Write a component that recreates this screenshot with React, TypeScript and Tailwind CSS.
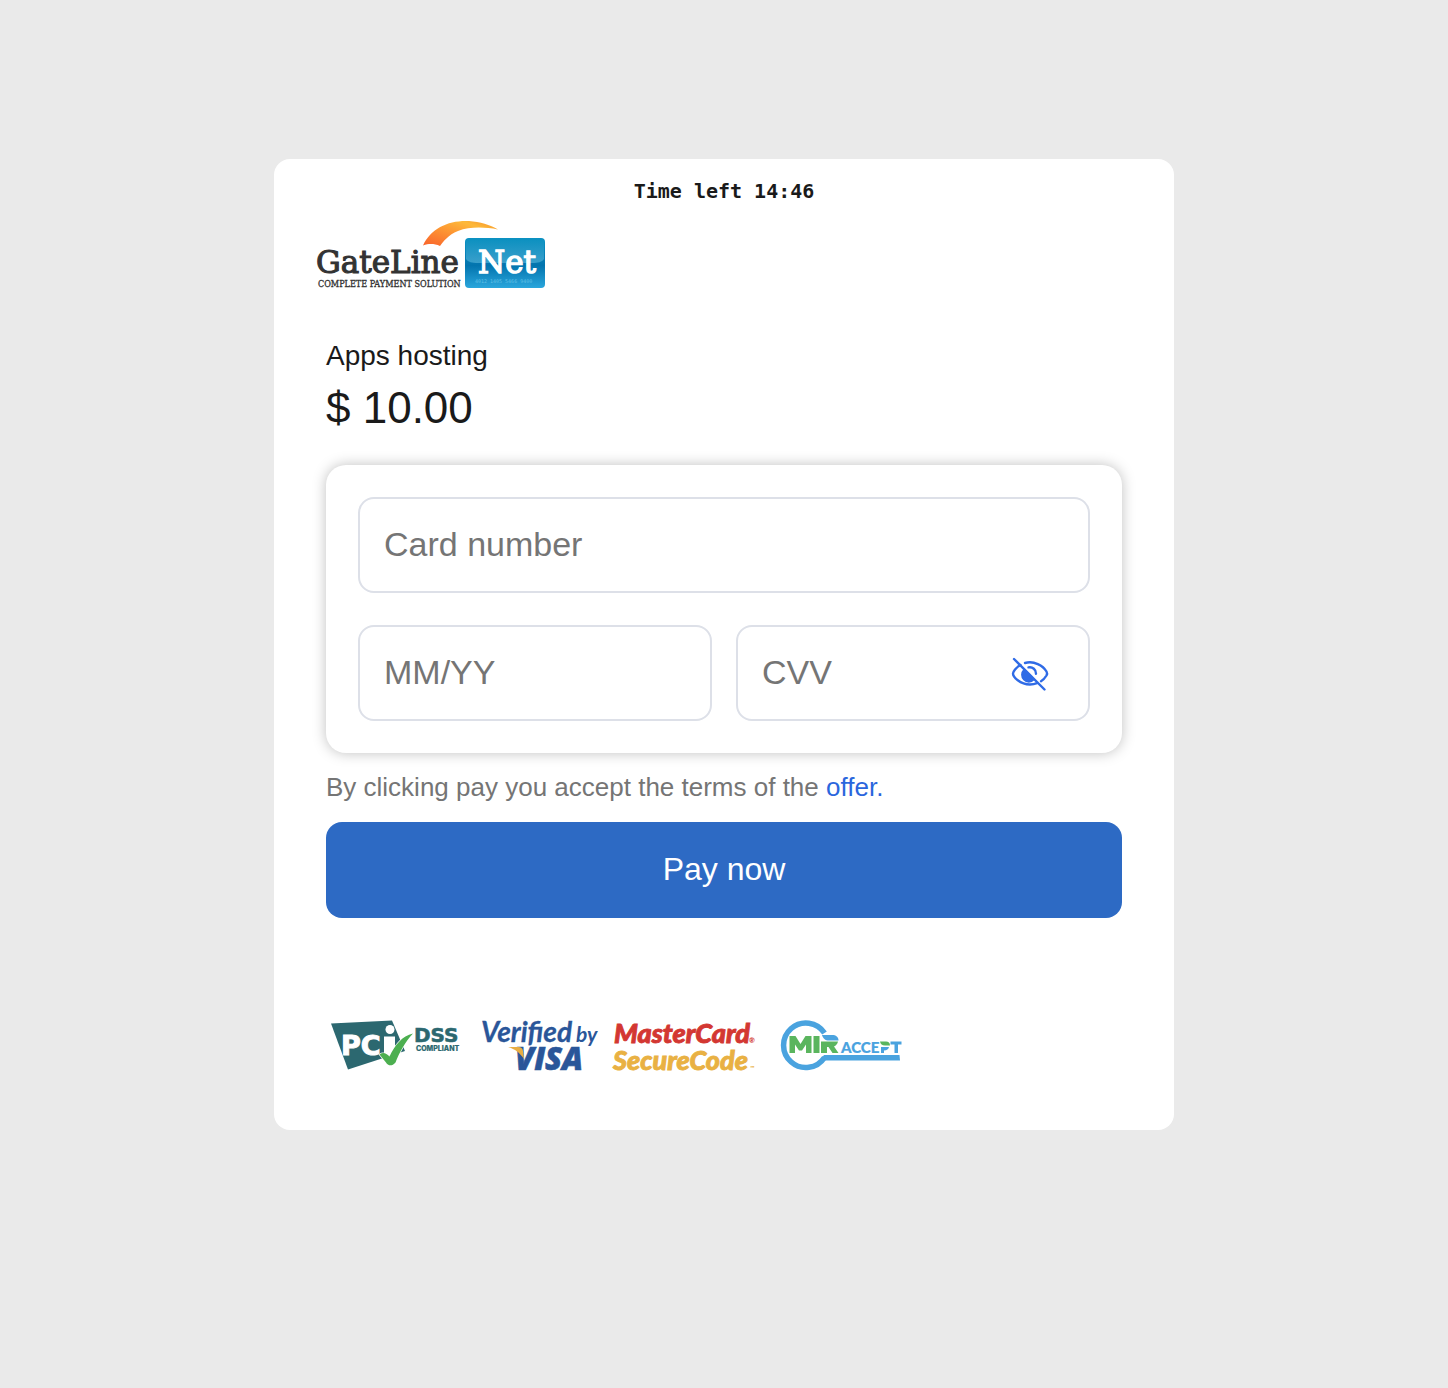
import { useState } from "react";

function GateLineLogo() {
  return (
    <svg viewBox="0 0 228 72" className="h-[72px] w-[228px] overflow-visible" role="img" aria-label="GateLine Net">
      <defs>
        <linearGradient id="swoosh" x1="0" y1="1" x2="1" y2="0">
          <stop offset="0" stopColor="#f9622c" />
          <stop offset="0.5" stopColor="#fd9a33" />
          <stop offset="0.75" stopColor="#fdb93a" />
          <stop offset="1" stopColor="#f58a28" />
        </linearGradient>
        <linearGradient id="tile" x1="0" y1="0" x2="0" y2="1">
          <stop offset="0" stopColor="#0c93c4" />
          <stop offset="0.55" stopColor="#0374ae" />
          <stop offset="1" stopColor="#2aa6dc" />
        </linearGradient>
        <linearGradient id="gloss" x1="0" y1="0" x2="0" y2="1">
          <stop offset="0" stopColor="#0b90c0" />
          <stop offset="1" stopColor="#3a9fcb" />
        </linearGradient>
      </defs>
      <path d="M105 26.5C113 9 131 1 151 2C162 2.7 172 6 180 10.5C166 8 152 7.500 140 12C130 16 126 22 122 27C116 24.500 111 24.500 105 26.500Z" fill="url(#swoosh)" />
      <text x="-2" y="54" fontFamily="'DejaVu Serif', serif" fontSize="31" fill="#333333" stroke="#333333" strokeWidth="1.1">GateLine</text>
      <text x="0" y="68" fontFamily="'DejaVu Serif Condensed', 'DejaVu Serif', serif" fontSize="9" fill="#333333" stroke="#333333" strokeWidth="0.3">COMPLETE PAYMENT SOLUTION</text>
      <rect x="147" y="19" width="80" height="50" rx="4" fill="url(#tile)" />
      <path d="M148 23a3.500 3.500 0 0 1 3.500-3.500h71a3.500 3.500 0 0 1 3.500 3.500v17c-2 3-6 4-12 4h-54c-6 0-10-1-12-4z" fill="url(#gloss)" />
      <text x="160" y="54" fontFamily="'DejaVu Serif', serif" fontSize="31" fill="#ffffff" stroke="#ffffff" strokeWidth="1.4">Net</text>
      <text x="157" y="64" fontFamily="'DejaVu Sans Mono', monospace" fontSize="5" fill="#5fc0e6">4012 1405 5466 9400</text>
    </svg>
  );
}

function PciLogo() {
  return (
    <svg viewBox="0 0 132 52" className="h-[52px] w-[132px] overflow-visible" role="img" aria-label="PCI DSS compliant">
      <path d="M1 4.500L62 1.500L75 32L18 50.500Z" fill="#2c6870" />
      <text x="11" y="36" fontFamily="'DejaVu Sans', sans-serif" fontWeight="700" fontSize="27" fill="#ffffff" stroke="#ffffff" strokeWidth="1">PC</text>
      <path d="M54 17.500h11v19h-11z" fill="#ffffff" />
      <circle cx="60" cy="10.500" r="4.500" fill="#ffffff" />
      <path d="M49.500 35.500C53 33 56 34 59.500 37.500C65 26 72 17 83 14.500C75 23 69 34 65.500 43.500C62 47.500 58 47 56 43.500Z" fill="#4caf50" stroke="#ffffff" strokeWidth="1.500" paintOrder="stroke" />
      <text x="84" y="23" fontFamily="'DejaVu Sans', sans-serif" fontWeight="700" fontSize="20" fill="#2c6870" stroke="#2c6870" strokeWidth="0.6">DSS</text>
      <text x="86" y="32" fontFamily="Inter, sans-serif" fontWeight="800" fontSize="7" fill="#2c6870" stroke="#2c6870" strokeWidth="0.2">COMPLIANT</text>
    </svg>
  );
}

function VerifiedByVisaLogo() {
  return (
    <svg viewBox="0 0 118 54" className="h-[54px] w-[118px] overflow-visible" role="img" aria-label="Verified by Visa">
      <g fill="#2a5699">
        <text x="-1" y="23" fontFamily="Lato, sans-serif" fontStyle="italic" fontWeight="700" fontSize="28" stroke="#2a5699" strokeWidth="0.3">Verified</text>
        <text x="94" y="23" fontFamily="Lato, sans-serif" fontStyle="italic" fontWeight="700" fontSize="21">by</text>
        <text x="33" y="51" fontFamily="'Open Sans', sans-serif" fontStyle="italic" fontWeight="800" fontSize="31" stroke="#2a5699" strokeWidth="0.6">VISA</text>
      </g>
      <path d="M26 28H36.500C39 28 40.500 29 41 32L42 40C38 34 33 30 26 28Z" fill="#e9ae42" />
    </svg>
  );
}

function SecureCodeLogo() {
  return (
    <svg viewBox="0 0 144 54" className="h-[54px] w-[144px] overflow-visible" role="img" aria-label="MasterCard SecureCode">
      <g fontFamily="Lato, sans-serif" fontStyle="italic" fontWeight="900">
        <g fill="#d33732" stroke="#d33732">
          <text x="2" y="24" fontSize="27" strokeWidth="0.9">MasterCard</text>
          <text x="137" y="24" fontSize="7" strokeWidth="0">®</text>
        </g>
        <g fill="#e9b143" stroke="#e9b143">
          <text x="1" y="51" fontSize="27" strokeWidth="0.9">SecureCode</text>
          <text x="138" y="51" fontSize="6" strokeWidth="0">™</text>
        </g>
      </g>
    </svg>
  );
}

function MirAcceptLogo() {
  return (
    <svg viewBox="0 0 124 52" className="h-[52px] w-[124px] overflow-visible" role="img" aria-label="MIR Accept">
      <path d="M44.500 14A22.300 22.300 0 1 0 44.500 38.500" fill="none" stroke="#4aa3df" strokeWidth="5.500" />
      <path d="M44 36h75.500l.5 5.500H40z" fill="#4aa3df" />
      <g fill="#5ab55e">
        <path d="M9.500 34V17h6l5 8 5-8h6v17h-5.500v-8.500l-4 6h-3l-4-6V34zM33.500 17H39.500v17h-6zM41 22.500h17c-.5 2.500-2 4-4 5l4.500 6.500h-6l-4-6H47v6h-6z" />
      </g>
      <path d="M42 16h10c4 0 6.500 2 6.500 5.500H49c-4 0-6-2-7-5.500z" fill="#4aa3df" />
      <text x="61" y="34" fontFamily="Lato, sans-serif" fontWeight="900" fontSize="15" fill="#4aa3df" stroke="#4aa3df" strokeWidth="0.2">ACCE</text>
      <path d="M101 28h8c-.5 2-2 3.500-5 3.500v2.500h-3zM110.500 22.500h11v3H118v8.500h-3.500v-8.500h-4z" fill="#4aa3df" />
      <path d="M100 22.500h6c2.500 0 4 1.500 4 4h-5c-3 0-4.500-1.500-5-4z" fill="#5ab55e" />
    </svg>
  );
}

function EyeOffIcon() {
  return (
    <svg viewBox="0 0 40 40" className="size-10" fill="none" stroke="#2f6be6" strokeWidth="2.400" strokeLinecap="round" aria-hidden="true">
      <path d="M4 5L34.500 35.500" />
      <path d="M10.500 11C6 13.500 3 17.500 3 19.500C3 23 10 30.500 20 30.500C22.500 30.500 25 30 27 29.200" />
      <path d="M15 9C24 6.500 33 11.500 36.500 17.500C37.500 19.200 37.300 20 36.500 21.500C35 24 33 26 31 27.200" />
      <path d="M18.500 13.400A6.200 6.200 0 0 1 26 19.800" />
      <path d="M14.200 16.200L23.500 25.500A6.500 6.500 0 0 1 14.200 16.200Z" fill="#2f6be6" />
    </svg>
  );
}

const field =
  "h-24 w-full min-w-0 rounded-2xl border-2 border-[#dde0e8] bg-white px-6 pb-0.5 text-[34px] text-[#1a1a1a] outline-none placeholder:text-[#757575] focus:border-[#2d6ac4]";

export default function App() {
  const [visible, setVisible] = useState(false);
  return (
    <div className="flex min-h-screen flex-col items-center bg-[#eaeaea] px-6 pt-[159px] pb-16 font-['Liberation_Sans',Arial,sans-serif] text-[#1a1a1a]">
      <main className="w-full max-w-[900px] rounded-2xl bg-white pt-5 pb-[57px]">
        <p className="text-center font-['DejaVu_Sans_Mono',monospace] text-[20px] leading-6 font-bold">Time left 14:46</p>
        <header className="mt-4 px-11">
          <GateLineLogo />
        </header>
        <div className="px-[52px]">
          <h1 className="mt-[45px] text-[28px] leading-10">Apps hosting</h1>
          <p className="mt-1 text-[44px] leading-[56px]">$ 10.00</p>
          <form onSubmit={(e) => e.preventDefault()}>
            <div className="mt-[29px] grid grid-cols-2 gap-x-6 gap-y-8 rounded-[20px] bg-white p-8 shadow-[0_0_14px_rgba(0,0,0,0.25)]">
              <input className={`${field} col-span-2`} aria-label="Card number" placeholder="Card number" inputMode="numeric" />
              <input className={field} aria-label="Expiry date" placeholder="MM/YY" inputMode="numeric" />
              <div className="relative">
                <input className={field} aria-label="CVV" placeholder="CVV" type={visible ? "text" : "password"} />
                <button type="button" aria-label="Show or hide CVV" className="absolute inset-y-0 right-10 flex items-center pt-0.5" onClick={() => setVisible(!visible)}>
                  <EyeOffIcon />
                </button>
              </div>
            </div>
            <p className="mt-4 text-[26px] leading-9 text-[#757575]">
              By clicking pay you accept the terms of the <a href="#offer" className="text-[#2a66dd]">offer.</a>
            </p>
            <button type="submit" className="mt-[17px] h-24 w-full rounded-2xl bg-[#2d6ac4] pb-0.5 text-[32px] text-white">Pay now</button>
          </form>
          <footer className="mt-[101px] flex flex-wrap items-start pl-1">
            <PciLogo />
            <div className="ml-5"><VerifiedByVisaLogo /></div>
            <div className="ml-3"><SecureCodeLogo /></div>
            <div className="ml-6"><MirAcceptLogo /></div>
          </footer>
        </div>
      </main>
    </div>
  );
}
